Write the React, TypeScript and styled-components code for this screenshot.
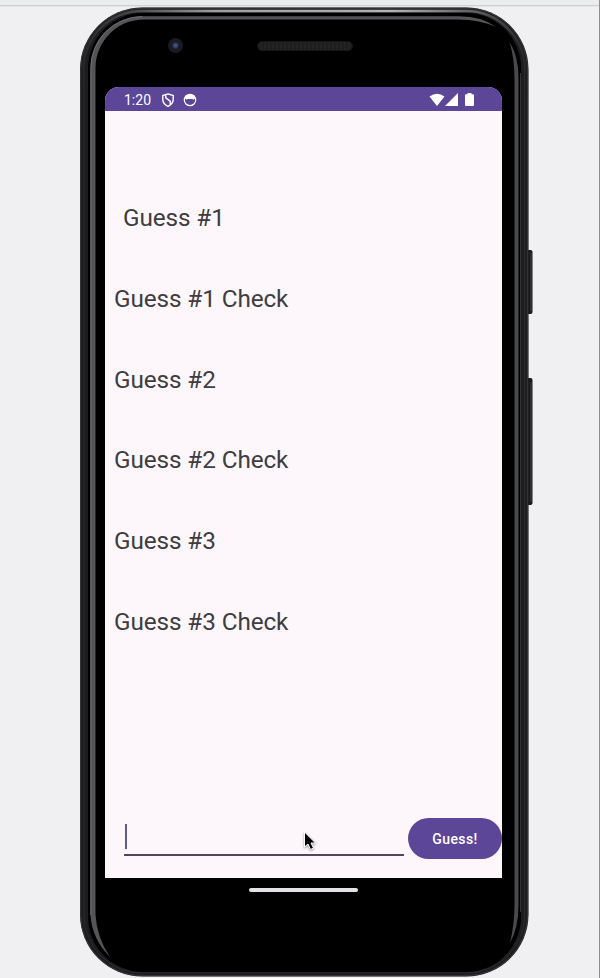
import React from "react";
import styled, { createGlobalStyle } from "styled-components";

const Global = createGlobalStyle`
  * { box-sizing: border-box; }
  html, body { margin: 0; padding: 0; background: #f0eff2; }
`;

const Stage = styled.main`
  position: relative;
  width: 600px;
  height: 978px;
  overflow: hidden;
  padding: 7px 0 0 80px;
  border-right: 1px solid #8d8d8d;
  background: linear-gradient(#ebecee 0 5px, #d0d0d1 5px 6px, #e6e5e7 6px 7px, #f0eff2 7px);
  font-family: Roboto, sans-serif;
`;

const Phone = styled.div`
  position: relative;
  width: 454px;
  height: 971px;
  display: flex;
  flex-direction: column;
  padding-left: 25px;
`;

const Shell = styled.svg`
  position: absolute;
  inset: 0;
`;

const Hardware = styled.div`
  position: relative;
  flex: none;
  height: 80px;
  display: flex;
  padding-top: 31px;
  padding-left: 63px;
`;

const Camera = styled.div`
  width: 15px;
  height: 15px;
  border-radius: 50%;
  background: radial-gradient(circle at 50% 50%, #43567f 0 1px, #202a49 3px, #181a25 4px, #1c1c20 5px 7px, #151517 8px);
`;

const Speaker = styled.div`
  width: 96px;
  height: 10px;
  margin: 3px 0 0 74px;
  border-radius: 5px;
  border: 1px solid #161617;
  background: repeating-linear-gradient(90deg, #1b1b1c55 0 2px, #2b2b2c55 2px 4px), #202021;
`;

const Screen = styled.div`
  position: relative;
  flex: none;
  width: 396.5px;
  height: 791px;
  display: flex;
  flex-direction: column;
  overflow: hidden;
  border-radius: 14px 14px 0 0;
  background: #fdf7fc;
`;

const StatusBar = styled.header`
  flex: none;
  height: 24px;
  display: flex;
  align-items: center;
  padding: 1px 27.5px 0 19px;
  background: #5c4698;
  color: #fff;
`;

const Clock = styled.time`
  width: 32px;
  font-size: 14px;
  line-height: 20px;
`;

const StatusIcon = styled.svg<{ $gap?: number }>`
  flex: none;
  margin-left: ${(p) => p.$gap ?? 0}px;
`;

const Spacer = styled.div`
  flex: 1;
`;

const Guesses = styled.section`
  display: flex;
  flex-direction: column;
  padding: 67px 0 0 9px;
`;

const Guess = styled.p<{ $inset?: boolean }>`
  margin: 0;
  height: 80.8px;
  padding-top: 24px;
  padding-left: ${(p) => (p.$inset ? 9 : 0)}px;
  color: #3e3d41;
  font-size: 24.3px;
  line-height: 32px;
  letter-spacing: -0.1px;
  white-space: nowrap;
`;

const Entry = styled.form`
  flex: none;
  height: 60px;
  display: flex;
  margin: auto 0 0;
  padding-left: 19px;
`;

const Field = styled.div`
  width: 280px;
  height: 38px;
  padding-top: 6px;
  border-bottom: 2px solid #50475f;
`;

const Caret = styled.div`
  width: 2px;
  height: 25px;
  margin-left: 0.5px;
  background: #5c6078;
`;

const Submit = styled.button`
  flex: none;
  width: 94px;
  height: 41px;
  margin-left: 4px;
  padding: 1px 0 0 1px;
  border: 0;
  border-radius: 21px;
  background: #5c4698;
  color: #fff;
  font: 500 14px/20px Roboto, sans-serif;
  letter-spacing: 0.4px;
`;

const HomeHandle = styled.div`
  position: relative;
  width: 109px;
  height: 4px;
  margin: 10px 0 0 144px;
  border-radius: 2px;
  background: #e5e2e5;
`;

const Pointer = styled.svg`
  position: absolute;
  left: 302px;
  top: 829px;
  filter: drop-shadow(0 1px 1px #0006);
`;

const labels = ["Guess #1", "Guess #1 Check", "Guess #2", "Guess #2 Check", "Guess #3", "Guess #3 Check"];

function PhoneShell() {
  return (
    <Shell width="454" height="971" viewBox="80 7 454 971" fill="none">
      <defs>
        <linearGradient id="rim" gradientUnits="userSpaceOnUse" x1="80" y1="0" x2="528" y2="0">
          <stop offset="0" stopColor="#303033" />
          <stop offset=".12" stopColor="#4a4a4d" />
          <stop offset=".3" stopColor="#a4a4a7" />
          <stop offset=".7" stopColor="#b8b8bb" />
          <stop offset=".88" stopColor="#626265" />
          <stop offset="1" stopColor="#303033" />
        </linearGradient>
        <linearGradient id="fade" gradientUnits="userSpaceOnUse" x1="0" y1="8" x2="0" y2="90">
          <stop offset="0" stopColor="#fff" />
          <stop offset="1" stopColor="#fff" stopOpacity="0" />
        </linearGradient>
        <mask id="upper"><path d="M80 0H530V90H80Z" fill="url(#fade)" /></mask>
      </defs>
      <rect x="526" y="250" width="6.5" height="64" rx="2" fill="#19191a" />
      <path d="M531 253V311" stroke="#454347" />
      <rect x="526" y="378" width="6.5" height="127" rx="2" fill="#19191a" />
      <path d="M531 382V502" stroke="#454347" />
      <rect x="80" y="7.5" width="448.5" height="969" rx="62" fill="#1d1d1f" />
      <rect x="80.7" y="8.2" width="447" height="967.5" rx="61" stroke="#39393c" />
      <rect x="84" y="11" width="440.5" height="962" rx="58" stroke="#2b2b2e" />
      <rect x="83" y="11" width="442" height="962" rx="59" stroke="url(#rim)" strokeWidth="2.5" mask="url(#upper)" />
      <rect x="88" y="13" width="433" height="959" rx="55" fill="#000" />
      <path
        d="M90.500 915V68A52 52 0 0 1 142.500 16.200H458Q482 16 496 27Q480 19.400 458 19.400H144A48.500 48.500 0 0 0 95.500 68V915Q97 938 110 957Q92 939 90.500 915Z"
        fill="#555558"
      />
      <path d="M90.800 915V68A51.500 51.500 0 0 1 142.500 16.500" stroke="#79797d" strokeWidth=".8" />
      <path d="M509.500 42Q518.500 56 518.500 78V905Q518.500 928 510 943Q514.500 924 514.500 905V78Q514.500 58 509.500 42Z" fill="#49484d" />
      <path d="M520.500 73V912" stroke="#343438" />
    </Shell>
  );
}

export default function App() {
  return (
    <>
      <Global />
      <Stage>
        <Phone>
          <PhoneShell />
          <Hardware><Camera /><Speaker /></Hardware>
          <Screen>
            <StatusBar>
              <Clock>1:20</Clock>
              <StatusIcon $gap={5} width="14" height="14" viewBox="0 0 14 14" fill="none" stroke="#fff" strokeWidth="1.4">
                <path d="M7 .9L12.200 2.600V6.500Q12.200 10.800 7 13.300Q1.800 10.800 1.800 6.500V2.600Z" />
                <path d="M4.800 2.200V4.800L9.200 8.200V11.500" />
              </StatusIcon>
              <StatusIcon $gap={8} width="14" height="14" viewBox="0 0 14 14">
                <circle cx="7" cy="7" r="5.700" fill="none" stroke="#fff" strokeWidth="1.200" />
                <path d="M1.600 5Q2 1.500 4 2Q7 .5 10 2Q12 1.500 12.400 5L10.500 6.800L9.300 6H4.700L3.500 6.800Z" fill="#fff" />
              </StatusIcon>
              <Spacer />
              <StatusIcon width="16" height="14" viewBox="0 0 16 14"><path d="M.5 3.500Q8-2 15.500 3.500L8 13Z" fill="#fff" /></StatusIcon>
              <StatusIcon width="13" height="14" viewBox="0 0 13 14"><path d="M13 0V13H0Z" fill="#fff" /></StatusIcon>
              <StatusIcon $gap={7} width="9" height="14" viewBox="0 0 9 14"><path d="M2.500 0H6.500V1.300H8Q9 1.300 9 2.300V12Q9 13 8 13H1Q0 13 0 12V2.300Q0 1.300 1 1.300H2.500Z" fill="#fff" /></StatusIcon>
            </StatusBar>
            <Guesses>
              {labels.map((label, i) => <Guess key={label} $inset={i === 0}>{label}</Guess>)}
            </Guesses>
            <Entry onSubmit={(e) => e.preventDefault()}>
              <Field><Caret /></Field>
              <Submit>Guess!</Submit>
            </Entry>
          </Screen>
          <HomeHandle />
        </Phone>
        <Pointer width="16" height="24" viewBox="0 0 16 24">
          <path d="M2.500 3V18L6 15L8.500 20.500L11.500 19L9 14H13.500Z" fill="#000" stroke="#fff" strokeWidth="1" />
        </Pointer>
      </Stage>
    </>
  );
}
